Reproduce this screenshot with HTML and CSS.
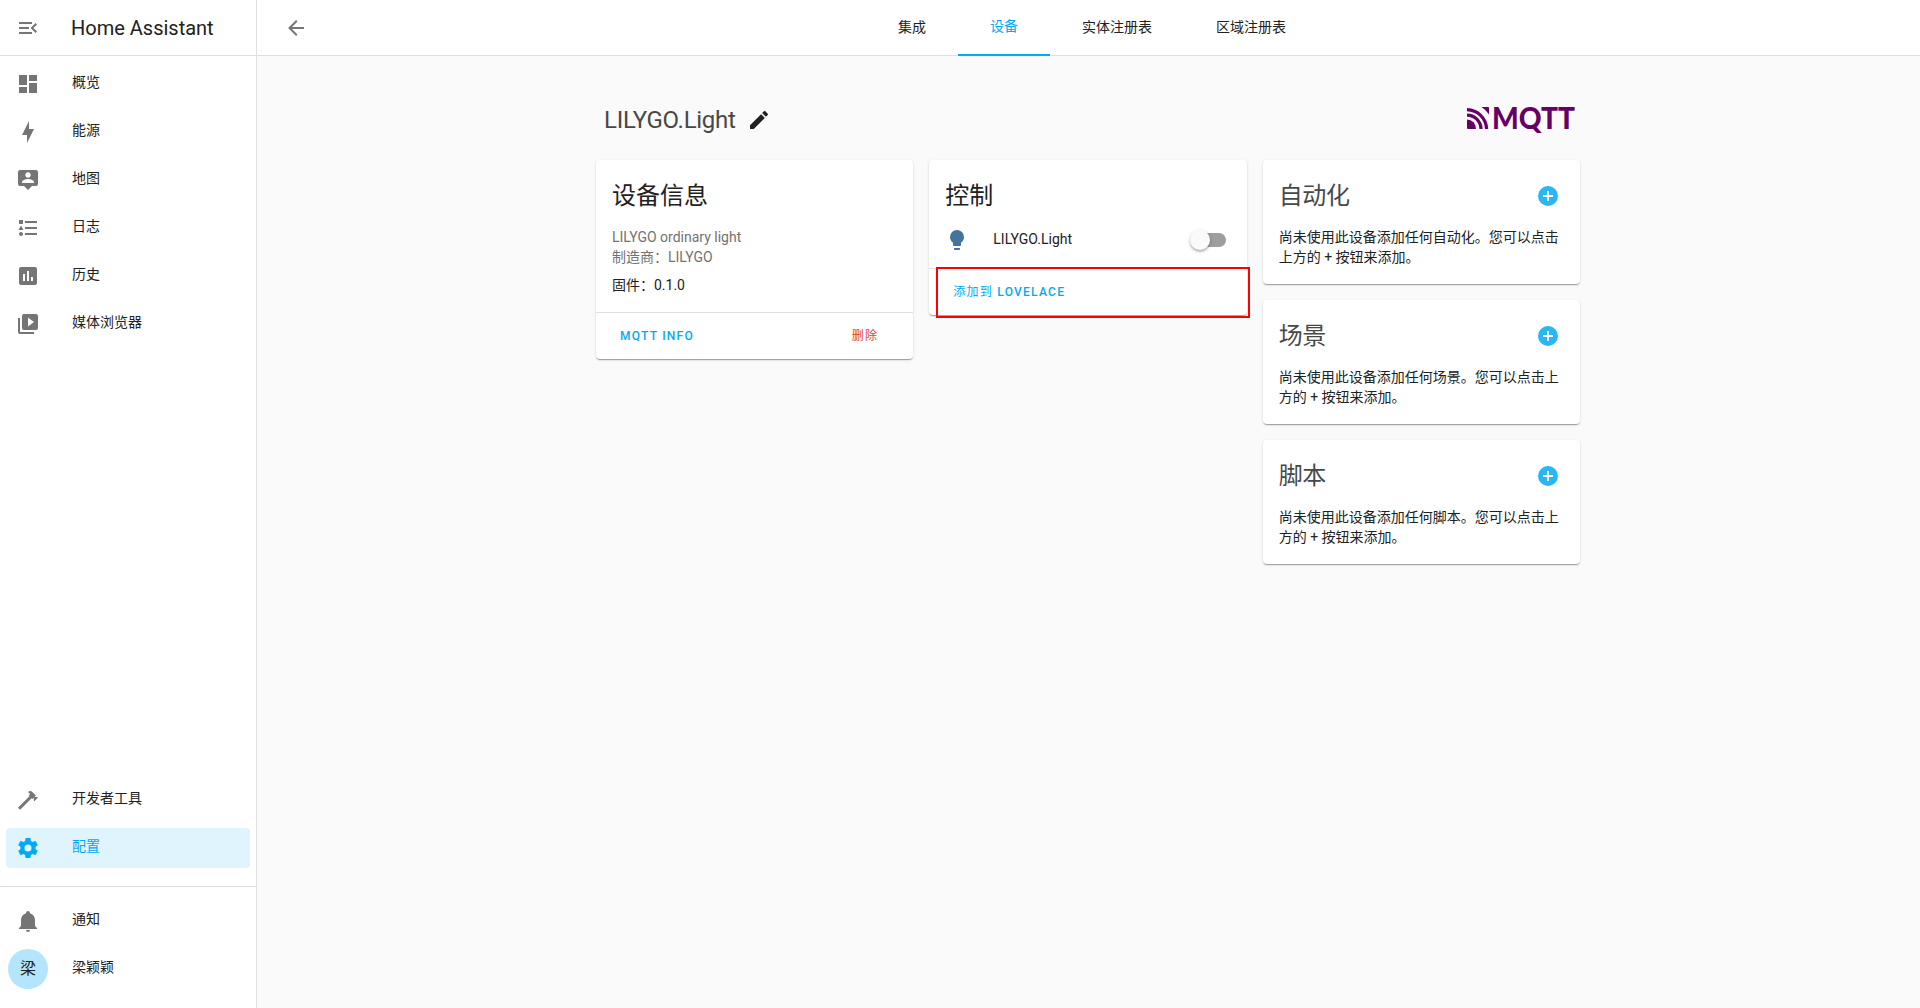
FILE: index.html
```html
<!DOCTYPE html>
<html lang="zh-CN">
<head>
<meta charset="utf-8">
<title>Home Assistant</title>
<link rel="stylesheet" href="styles.css">
</head>
<body>
<div class="app">
  <aside class="sidebar">
    <div class="brand">
      <svg class="icon" viewBox="0 0 24 24"><path d="M21,15.61L19.59,17L14.58,12L19.59,7L21,8.39L17.44,12L21,15.61M3,6H16V8H3V6M3,13V11H13V13H3M3,18V16H16V18H3Z"/></svg>
      <span class="brand-name">Home Assistant</span>
    </div>
    <nav class="menu">
      <a class="item"><svg class="icon" viewBox="0 0 24 24"><path d="M13,3V9H21V3M13,21H21V11H13M3,21H11V15H3M3,13H11V3H3V13Z"/></svg><span class="label">概览</span></a>
      <a class="item"><svg class="icon" viewBox="0 0 24 24"><path d="M11 15H6L13 1V9H18L11 23V15Z"/></svg><span class="label">能源</span></a>
      <a class="item"><svg class="icon" viewBox="0 0 24 24"><path d="M20,2H4A2,2 0 0,0 2,4V16A2,2 0 0,0 4,18H8L12,22L16,18H20A2,2 0 0,0 22,16V4A2,2 0 0,0 20,2M12,4.3C13.5,4.3 14.7,5.5 14.7,7C14.7,8.5 13.5,9.7 12,9.7C10.5,9.7 9.3,8.5 9.3,7C9.3,5.5 10.5,4.3 12,4.3M18,15H6V14.1C6,12.1 10,11 12,11C14,11 18,12.1 18,14.1V15Z"/></svg><span class="label">地图</span></a>
      <a class="item"><svg class="icon" viewBox="0 0 24 24"><path d="M5,9.5L7.5,14H2.5L5,9.5M3,4H7V8H3V4M5,20A2,2 0 0,0 7,18A2,2 0 0,0 5,16A2,2 0 0,0 3,18A2,2 0 0,0 5,20M9,5V7H21V5H9M9,19H21V17H9V19M9,13H21V11H9V13Z"/></svg><span class="label">日志</span></a>
      <a class="item"><svg class="icon" viewBox="0 0 24 24"><path d="M17,17H15V13H17M13,17H11V7H13M9,17H7V10H9M19,3H5C3.89,3 3,3.89 3,5V19A2,2 0 0,0 5,21H19A2,2 0 0,0 21,19V5C21,3.89 20.1,3 19,3Z"/></svg><span class="label">历史</span></a>
      <a class="item"><svg class="icon" viewBox="0 0 24 24"><path d="M4,6H2V20A2,2 0 0,0 4,22H18V20H4V6M20,2H8A2,2 0 0,0 6,4V16A2,2 0 0,0 8,18H20A2,2 0 0,0 22,16V4A2,2 0 0,0 20,2M12,14.5V5.5L18,10L12,14.5Z"/></svg><span class="label">媒体浏览器</span></a>
      <span class="spacer"></span>
      <a class="item"><svg class="icon" viewBox="0 0 24 24"><path d="M2,19.63L13.43,8.2L12.72,7.5L14.14,6.07L12,3.89C13.2,2.7 15.09,2.7 16.27,3.89L19.87,7.5L18.45,8.91H21.29L22,9.62L18.45,13.21L17.74,12.5V9.62L16.27,11.04L15.56,10.33L4.13,21.76L2,19.63Z"/></svg><span class="label">开发者工具</span></a>
      <a class="item selected"><svg class="icon" viewBox="0 0 24 24"><path d="M12,15.5A3.5,3.5 0 0,1 8.5,12A3.5,3.5 0 0,1 12,8.5A3.5,3.5 0 0,1 15.5,12A3.5,3.5 0 0,1 12,15.5M19.43,12.97C19.47,12.65 19.5,12.33 19.5,12C19.5,11.67 19.47,11.34 19.43,11L21.54,9.37C21.73,9.22 21.78,8.95 21.66,8.73L19.66,5.27C19.54,5.05 19.27,4.96 19.05,5.05L16.56,6.05C16.04,5.66 15.5,5.32 14.87,5.07L14.5,2.42C14.46,2.18 14.25,2 14,2H10C9.75,2 9.54,2.18 9.5,2.42L9.13,5.07C8.5,5.32 7.96,5.66 7.44,6.05L4.95,5.05C4.73,4.96 4.46,5.05 4.34,5.27L2.34,8.73C2.21,8.95 2.27,9.22 2.46,9.37L4.57,11C4.53,11.34 4.5,11.67 4.5,12C4.5,12.33 4.53,12.65 4.57,12.97L2.46,14.63C2.27,14.78 2.21,15.05 2.34,15.27L4.34,18.73C4.46,18.95 4.73,19.03 4.95,18.95L7.44,17.94C7.96,18.34 8.5,18.68 9.13,18.93L9.5,21.58C9.54,21.82 9.75,22 10,22H14C14.25,22 14.46,21.82 14.5,21.58L14.87,18.93C15.5,18.67 16.04,18.34 16.56,17.94L19.05,18.95C19.27,19.03 19.54,18.95 19.66,18.73L21.66,15.27C21.78,15.05 21.73,14.78 21.54,14.63L19.43,12.97Z"/></svg><span class="label">配置</span></a>
    </nav>
    <div class="account">
      <a class="item"><svg class="icon" viewBox="0 0 24 24"><path d="M21,19V20H3V19L5,17V11C5,7.9 7.03,5.17 10,4.29C10,4.19 10,4.1 10,4A2,2 0 0,1 12,2A2,2 0 0,1 14,4C14,4.1 14,4.19 14,4.29C16.97,5.17 19,7.9 19,11V17L21,19M14,21A2,2 0 0,1 12,23A2,2 0 0,1 10,21"/></svg><span class="label">通知</span></a>
      <a class="item profile"><span class="avatar">梁</span><span class="label">梁颖颖</span></a>
    </div>
  </aside>

  <div class="main">
    <header class="toolbar">
      <svg class="icon back" viewBox="0 0 24 24"><path d="M20,11V13H8L13.5,18.5L12.08,19.92L4.16,12L12.08,4.08L13.5,5.5L8,11H20Z"/></svg>
      <nav class="tabs">
        <a class="tab">集成</a>
        <a class="tab active">设备</a>
        <a class="tab">实体注册表</a>
        <a class="tab">区域注册表</a>
      </nav>
    </header>

    <main class="content">
      <div class="page-head">
        <h1 class="device-name">LILYGO.Light</h1>
        <svg class="icon pencil" viewBox="0 0 24 24"><path d="M20.71,7.04C21.1,6.65 21.1,6 20.71,5.63L18.37,3.29C18,2.9 17.35,2.9 16.96,3.29L15.12,5.12L18.87,8.87M3,17.25V21H6.75L17.81,9.93L14.06,6.18L3,17.25Z"/></svg>
        <svg class="logo" width="110" height="40" viewBox="0 -5 110 40">
          <path d="M1,14.5A9,9 0 0,1 10,24H2A1,1 0 0,1 1,23Z"/>
          <path class="arc" d="M1,10.2A14,14 0 0,1 15,24M1,4.6A20,20 0 0,1 20.6,24"/>
          <path d="M15.5,2H22A1,1 0 0,1 23,3V9.5A23,23 0 0,0 15.5,2Z"/>
          <text class="logo-text" x="26" y="24" textLength="83" lengthAdjust="spacingAndGlyphs">MQTT</text>
        </svg>
      </div>

      <div class="columns">
        <section class="card">
          <h2 class="card-title">设备信息</h2>
          <div class="info">
            <p class="muted">LILYGO ordinary light</p>
            <p class="muted">制造商：LILYGO</p>
            <p class="firmware">固件：0.1.0</p>
          </div>
          <div class="actions split">
            <span class="button">MQTT INFO</span>
            <span class="button warning">删除</span>
          </div>
        </section>

        <section class="card controls">
          <h2 class="card-title">控制</h2>
          <div class="entity">
            <svg class="icon bulb" viewBox="0 0 24 24"><path d="M12,2A7,7 0 0,0 5,9C5,11.38 6.19,13.47 8,14.74V17A1,1 0 0,0 9,18H15A1,1 0 0,0 16,17V14.74C17.81,13.47 19,11.38 19,9A7,7 0 0,0 12,2M9,21A1,1 0 0,0 10,22H14A1,1 0 0,0 15,21V20H9V21Z"/></svg>
            <span class="entity-name">LILYGO.Light</span>
            <span class="switch"><span class="thumb"></span></span>
          </div>
          <div class="actions">
            <span class="button"><span class="regular">添加到</span> LOVELACE</span>
          </div>
          <span class="highlight"></span>
        </section>

        <div class="stack">
          <section class="card">
            <div class="card-head"><h2 class="card-title soft">自动化</h2><svg class="icon plus" viewBox="0 0 24 24"><path d="M17,13H13V17H11V13H7V11H11V7H13V11H17M12,2A10,10 0 0,0 2,12A10,10 0 0,0 12,22A10,10 0 0,0 22,12A10,10 0 0,0 12,2Z"/></svg></div>
            <p class="empty">尚未使用此设备添加任何自动化。您可以点击<br>上方的 + 按钮来添加。</p>
          </section>
          <section class="card">
            <div class="card-head"><h2 class="card-title soft">场景</h2><svg class="icon plus" viewBox="0 0 24 24"><path d="M17,13H13V17H11V13H7V11H11V7H13V11H17M12,2A10,10 0 0,0 2,12A10,10 0 0,0 12,22A10,10 0 0,0 22,12A10,10 0 0,0 12,2Z"/></svg></div>
            <p class="empty">尚未使用此设备添加任何场景。您可以点击上<br>方的 + 按钮来添加。</p>
          </section>
          <section class="card">
            <div class="card-head"><h2 class="card-title soft">脚本</h2><svg class="icon plus" viewBox="0 0 24 24"><path d="M17,13H13V17H11V13H7V11H11V7H13V11H17M12,2A10,10 0 0,0 2,12A10,10 0 0,0 12,22A10,10 0 0,0 22,12A10,10 0 0,0 12,2Z"/></svg></div>
            <p class="empty">尚未使用此设备添加任何脚本。您可以点击上<br>方的 + 按钮来添加。</p>
          </section>
        </div>
      </div>
    </main>
  </div>
</div>
</body>
</html>
```
FILE: styles.css
```css
* {
  box-sizing: border-box;
}

body {
  margin: 0;
  background: #fafafa;
  color: #212121;
  font-family: Roboto, "Noto Sans CJK SC", sans-serif;
  font-size: 14px;
  line-height: 20px;
}

h1, h2, p {
  margin: 0;
  font-weight: 400;
}

.app {
  display: flex;
  height: 1008px;
  overflow: hidden;
}

.icon {
  flex: none;
  width: 24px;
  height: 24px;
  fill: #757575;
}

/* Sidebar */
.sidebar {
  flex: none;
  display: flex;
  flex-direction: column;
  width: 257px;
  background: #fff;
  border-right: 1px solid #e0e0e0;
}

.brand {
  flex: none;
  display: flex;
  align-items: center;
  gap: 31px;
  height: 56px;
  padding-left: 16px;
  border-bottom: 1px solid #e0e0e0;
}

.brand-name {
  font-size: 20px;
}

.menu {
  flex: 1;
  display: flex;
  flex-direction: column;
  gap: 8px;
  padding: 8px 6px 18px;
}

.spacer {
  flex: 1;
}

.item {
  flex: none;
  display: flex;
  align-items: center;
  gap: 32px;
  height: 40px;
  padding-left: 10px;
  border-radius: 4px;
}

.label {
  margin-top: -4px;
}

.selected {
  background: #e0f4fe;
  color: #03a9f4;
}

.selected .icon {
  fill: #03a9f4;
}

.account {
  flex: none;
  display: flex;
  flex-direction: column;
  gap: 8px;
  height: 122px;
  padding: 14px 6px 0;
  border-top: 1px solid #e0e0e0;
}

.profile {
  gap: 24px;
  padding-left: 2px;
}

.avatar {
  width: 40px;
  height: 40px;
  border-radius: 50%;
  background: #b3e5fc;
  font-size: 16px;
  line-height: 40px;
  text-align: center;
}

/* Toolbar */
.main {
  flex: 1;
  min-width: 0;
}

.toolbar {
  display: flex;
  align-items: center;
  height: 56px;
  padding-left: 27px;
  background: #fff;
  border-bottom: 1px solid #e0e0e0;
}

.back {
  margin-top: 1px;
}

.tabs {
  display: flex;
  align-self: stretch;
  height: 56px;
  margin-left: 558px;
}

.tab {
  padding: 0 32px;
  line-height: 54px;
}

.active {
  border-bottom: 2px solid #03a9f4;
  color: #03a9f4;
  line-height: 52px;
}

/* Device page */
.content {
  width: 1323px;
  padding: 48px 0 0 339px;
}

.page-head {
  display: flex;
  align-items: center;
  height: 32px;
  margin-bottom: 24px;
  padding: 0 4px 0 8px;
}

.device-name {
  font-size: 24px;
  letter-spacing: -0.012em;
  line-height: 32px;
  opacity: 0.82;
}

.pencil {
  margin-left: 11px;
  fill: #212121;
}

.logo {
  margin-left: auto;
  overflow: visible;
  fill: #660066;
}

.arc {
  fill: none;
  stroke: #660066;
  stroke-width: 3.2;
}

.logo-text {
  font-family: Lato, sans-serif;
  font-size: 30px;
  font-weight: 900;
}

.columns {
  display: grid;
  grid-template-columns: repeat(3, 1fr);
  align-items: start;
  gap: 16px;
}

.stack {
  display: grid;
  gap: 16px;
}

.card {
  background: #fff;
  border-radius: 4px;
  box-shadow: 0 2px 1px -1px rgba(0, 0, 0, 0.2), 0 1px 1px 0 rgba(0, 0, 0, 0.14), 0 1px 3px 0 rgba(0, 0, 0, 0.12);
}

.card-title {
  height: 64px;
  padding: 16px 16px 0;
  font-size: 24px;
  line-height: 40px;
}

.soft {
  opacity: 0.82;
  letter-spacing: -0.012em;
}

.info {
  height: 88px;
  padding: 3px 16px 0;
}

.muted {
  color: #727272;
}

.firmware {
  margin-top: 8px;
}

.actions {
  display: flex;
  height: 47px;
  padding: 5px 16px;
  border-top: 1px solid #e0e0e0;
}

.split {
  justify-content: space-between;
}

.button {
  padding: 0 8px;
  color: #03a9f4;
  font-size: 12px;
  font-weight: 500;
  letter-spacing: 1.25px;
  line-height: 36px;
}

.regular {
  font-weight: 400;
}

.warning {
  padding-right: 19px;
  color: #db4437;
  font-weight: 400;
}

.controls {
  position: relative;
}

.entity {
  display: flex;
  align-items: center;
  height: 44px;
  padding: 0 21px 12px 16px;
}

.bulb {
  fill: #44739e;
}

.entity-name {
  flex: 1;
  margin: -2px 0 0 24px;
}

.switch {
  display: flex;
  align-items: center;
  width: 32px;
  height: 14px;
  border-radius: 7px;
  background: #9e9e9e;
}

.thumb {
  flex: none;
  width: 20px;
  height: 20px;
  margin-left: -4px;
  border-radius: 50%;
  background: #fafafa;
  box-shadow: 0 2px 2px rgba(0, 0, 0, 0.2), 0 1px 4px rgba(0, 0, 0, 0.15);
}

/* Marker frame drawn over the card's action row */
.highlight {
  position: absolute;
  top: 107px;
  left: 7px;
  width: 314px;
  height: 51px;
  border: 2px solid #f00;
}

.card-head {
  display: flex;
  justify-content: space-between;
  height: 64px;
  padding-right: 20px;
}

.plus {
  margin-top: 24px;
  fill: #29b6f6;
}

.empty {
  height: 60px;
  padding: 3px 16px 0;
}
```
